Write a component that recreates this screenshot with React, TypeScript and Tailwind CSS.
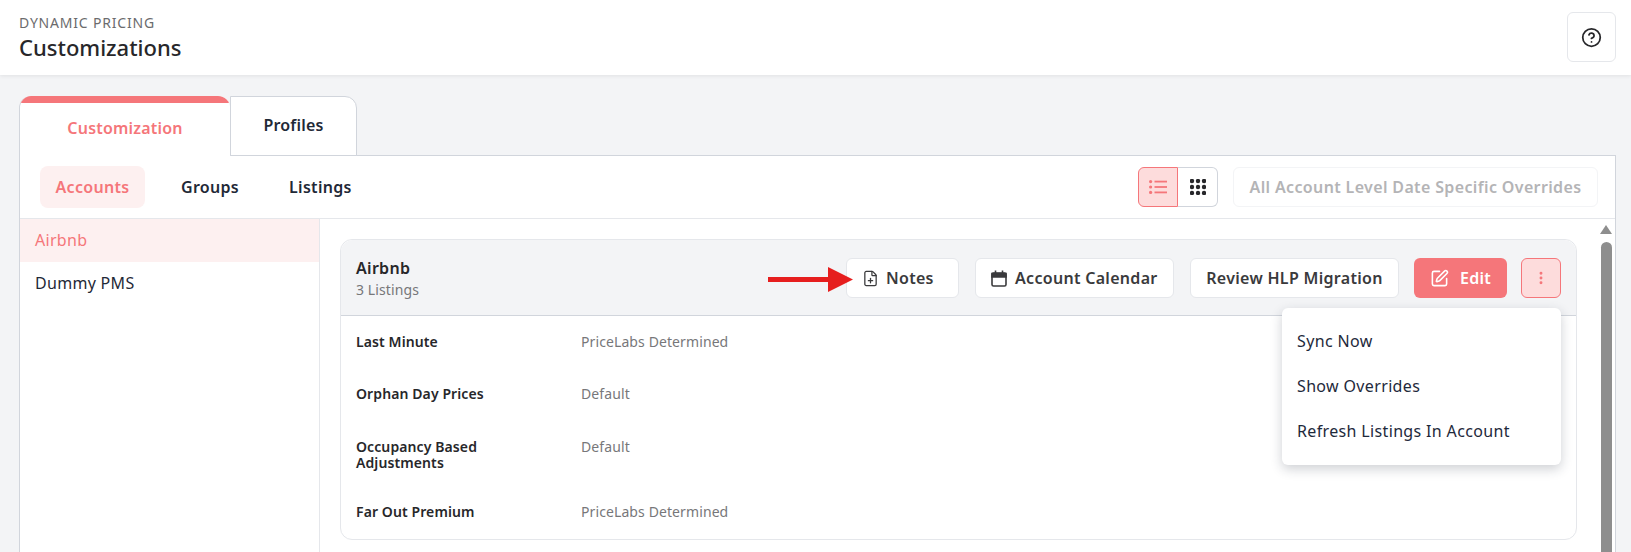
import { CircleHelp, EllipsisVertical, FilePlus, SquarePen } from "lucide-react";

const rows = [
  { label: "Last Minute", value: "PriceLabs Determined", h: "h-[50px]" },
  { label: "Orphan Day Prices", value: "Default", h: "h-[52px]" },
  { label: "Occupancy Based Adjustments", value: "Default", h: "h-[65px]" },
  { label: "Far Out Premium", value: "PriceLabs Determined", h: "h-[44px]" },
];

function OutlineButton({ className, children }: { className: string; children: React.ReactNode }) {
  return (
    <button className={`flex h-10 items-center rounded-md border border-gray-200 bg-white text-base font-semibold tracking-[0.3px] text-[#3a3a3c] ${className}`}>
      {children}
    </button>
  );
}

export default function App() {
  return (
    <div className="relative h-[552px] overflow-hidden bg-[#f3f4f6] font-['Noto_Sans',sans-serif] tracking-[0.3px]">
      {/* top bar */}
      <header className="flex h-[75px] items-start justify-between bg-white pl-[19px] pr-[15px] pt-[13px] shadow-[0_1px_4px_rgba(0,0,0,0.08)]">
        <div>
          <div className="text-sm leading-5 tracking-[0.8px] text-[#6b6b6d]">DYNAMIC PRICING</div>
          <div className="text-[22px] font-medium leading-7 tracking-[0px] text-[#27272a]">Customizations</div>
        </div>
        <button className="-mt-px flex h-[50px] w-[49px] items-center justify-center rounded-md border border-gray-200 bg-white text-[#27272a]">
          <CircleHelp size={21} strokeWidth={2} />
        </button>
      </header>

      <div className="pl-[19px] pr-[15px] pt-[21px]">
        {/* tabs */}
        <div className="relative z-10 -mb-px flex h-[60px] items-stretch">
          <div className="w-[211px] overflow-hidden rounded-t-xl border-l border-gray-300 bg-white">
            <div className="h-[7px] bg-[#f5767a]" />
            <div className="flex h-[49px] items-center justify-center text-base font-semibold tracking-[0.2px] text-[#f5767a]">Customization</div>
          </div>
          <div className="flex w-[127px] items-start justify-center rounded-tr-xl border border-gray-300 bg-white pt-4 text-base font-semibold tracking-[0.2px] text-[#1f2937]">
            Profiles
          </div>
        </div>

        <div className="border border-b-0 border-gray-300 bg-white">
          {/* sub navigation */}
          <div className="flex h-[63px] items-center justify-between border-b border-gray-200 pl-5 pr-[17px]">
            <div className="flex items-center">
              <div className="flex h-[42px] w-[105px] items-center justify-center rounded-lg bg-[#fdf0f0] text-base font-semibold text-[#f5767a]">Accounts</div>
              <div className="ml-[36px] text-base font-semibold text-[#1f2937]">Groups</div>
              <div className="ml-[50px] text-base font-semibold text-[#1f2937]">Listings</div>
            </div>
            <div className="flex items-center">
              <div className="flex h-10 w-10 items-center justify-center rounded-l-md border border-[#f5767a] bg-[#fddcdc]">
                <svg width="18" height="14" viewBox="0 0 18 14" fill="#f5767a">
                  <circle cx="1.6" cy="1.6" r="1.6" />
                  <circle cx="1.6" cy="7" r="1.6" />
                  <circle cx="1.6" cy="12.4" r="1.6" />
                  <rect x="5.5" y="0.7" width="12.5" height="1.8" />
                  <rect x="5.5" y="6.1" width="12.5" height="1.8" />
                  <rect x="5.5" y="11.5" width="12.5" height="1.8" />
                </svg>
              </div>
              <div className="flex h-10 w-10 items-center justify-center rounded-r-md border border-l-0 border-gray-300 bg-white">
                <svg width="16" height="16" viewBox="0 0 16 16" fill="#27272a">
                  {[2, 8, 14].map((y) =>
                    [2, 8, 14].map((x) => <circle key={`${x}-${y}`} cx={x} cy={y} r="2.2" />)
                  )}
                </svg>
              </div>
              <button className="ml-[15px] flex h-[40px] w-[365px] items-center justify-center rounded-md border border-gray-100 bg-white text-base font-semibold tracking-[0.36px] text-[#b4b4b6]">
                All Account Level Date Specific Overrides
              </button>
            </div>
          </div>

          <div className="flex h-[340px]">
            {/* account list */}
            <div className="w-[300px] shrink-0 border-r border-gray-200">
              <div className="flex h-[43px] items-center bg-[#fdf0f0] pb-px pl-[15px] text-base text-[#f5767a]">Airbnb</div>
              <div className="flex h-[43px] items-center pb-px pl-[15px] text-base text-[#1f2937]">Dummy PMS</div>
            </div>

            {/* account card */}
            <div className="flex min-w-0 flex-1 pl-5 pt-5">
              <div className="relative h-[301px] w-[1237px] shrink-0 rounded-xl border border-gray-200 bg-white">
                <div className="flex h-[76px] items-start justify-between rounded-t-xl border-b border-gray-300 bg-[#f3f4f6] pl-[15px] pr-[15px] pt-[18px]">
                  <div>
                    <div className="text-base font-semibold leading-5 text-[#27272a]">Airbnb</div>
                    <div className="mt-[2px] text-sm leading-5 tracking-[0.1px] text-[#77777a]">3 Listings</div>
                  </div>
                  <div className="flex items-center">
                    <OutlineButton className="w-[113px] pl-[15px]">
                      <FilePlus size={17} strokeWidth={1.8} />
                      <span className="ml-[7px]">Notes</span>
                    </OutlineButton>
                    <OutlineButton className="ml-4 w-[199px] pl-[15px]">
                      <svg width="16" height="17" viewBox="0 0 16 17" fill="none" stroke="#3a3a3c" strokeWidth="1.6">
                        <rect x="1" y="3" width="14" height="13" rx="1.5" />
                        <path d="M1 3.5h14v3.5H1z" fill="#3a3a3c" />
                        <path d="M4.5 0.5v3M11.5 0.5v3" />
                      </svg>
                      <span className="ml-2">Account Calendar</span>
                    </OutlineButton>
                    <OutlineButton className="ml-4 w-[209px] justify-center">Review HLP Migration</OutlineButton>
                    <button className="ml-[15px] flex h-10 w-[93px] items-center justify-center rounded-md bg-[#f5767a] text-base font-semibold text-white">
                      <SquarePen size={19} strokeWidth={2} />
                      <span className="ml-[11px]">Edit</span>
                    </button>
                    <button className="ml-[14px] flex h-10 w-10 items-center justify-center rounded-md border border-[#f5767a] bg-[#fddcdc] text-[#f5767a]">
                      <EllipsisVertical size={16} strokeWidth={2.4} />
                    </button>
                  </div>
                </div>

                <div className="pl-[15px] pt-[18px]">
                  {rows.map((r, i) => (
                    <div key={r.label} className={`flex items-start ${r.h} ${i === 0 ? "mb-[2px]" : ""} ${i === 1 ? "mb-px" : ""}`}>
                      <div className="w-[225px] pr-[60px] text-sm font-semibold leading-4 tracking-[0.1px] text-[#27272a]">{r.label}</div>
                      <div className="text-sm leading-4 tracking-[0.1px] text-[#77777a]">{r.value}</div>
                    </div>
                  ))}
                </div>

                {/* kebab menu */}
                <div className="absolute right-[15px] top-[68px] z-10 flex h-[157px] w-[279px] flex-col justify-center gap-[21px] rounded-md bg-white pb-px pl-[15px] tracking-[0.35px] shadow-[0_4px_12px_rgba(30,41,59,0.22)]">
                  <div className="text-base leading-6 text-[#1e293b]">Sync Now</div>
                  <div className="text-base leading-6 text-[#1e293b]">Show Overrides</div>
                  <div className="text-base leading-6 text-[#1e293b]">Refresh Listings In Account</div>
                </div>
              </div>

              {/* scrollbar */}
              <div className="ml-[23px] -mt-[14px] flex w-3 shrink-0 flex-col items-center">
                <div className="h-0 w-0 border-x-[6px] border-b-[9px] border-x-transparent border-b-[#8e8e8e]" />
                <div className="mt-[8px] h-[320px] w-[11px] rounded-t-md bg-[#8e8e8e]" />
              </div>
            </div>
          </div>
        </div>
      </div>

      {/* annotation arrow */}
      <svg className="absolute left-[768px] top-[264px]" width="86" height="30" viewBox="0 0 86 30">
        <path d="M0 13h60V3l25 12.5L60 28V18H0z" fill="#e61e1e" />
      </svg>
    </div>
  );
}
